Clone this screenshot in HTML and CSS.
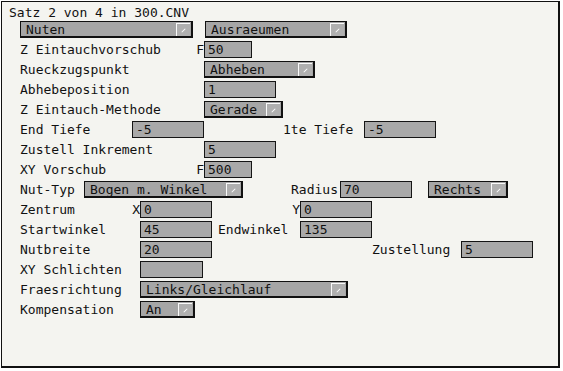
FILE: index.html
```html
<!DOCTYPE html>
<html lang="de">
<head>
  <meta charset="UTF-8">
  <title>Satz 2 von 4 in 300.CNV</title>
  <link rel="stylesheet" href="styles.css">
</head>
<body>

  <div class="frame">
    <div class="title">Satz 2 von 4 in 300.CNV</div>

    <!-- Kopfzeile: Bearbeitung -->
    <div class="row">
      <div class="select w173"><span class="val">Nuten</span><span class="arrow"></span></div>
      <div class="select w142 ml12"><span class="val">Ausraeumen</span><span class="arrow"></span></div>
    </div>

    <div class="row">
      <span class="lbl w184"><span>Z Eintauchvorschub</span><span>F</span></span>
      <span class="field w48">50</span>
    </div>

    <div class="row">
      <span class="lbl w184">Rueckzugspunkt</span>
      <div class="select w111"><span class="val">Abheben</span><span class="arrow"></span></div>
    </div>

    <div class="row">
      <span class="lbl w184">Abhebeposition</span>
      <span class="field w72">1</span>
    </div>

    <div class="row">
      <span class="lbl w184">Z Eintauch-Methode</span>
      <div class="select w79"><span class="val">Gerade</span><span class="arrow"></span></div>
    </div>

    <div class="row">
      <span class="lbl w112">End Tiefe</span>
      <span class="field w72">-5</span>
      <span class="lbl w81 ml79">1te Tiefe</span>
      <span class="field w72">-5</span>
    </div>

    <div class="row">
      <span class="lbl w184">Zustell Inkrement</span>
      <span class="field w72">5</span>
    </div>

    <div class="row">
      <span class="lbl w184"><span>XY Vorschub</span><span>F</span></span>
      <span class="field w48">500</span>
    </div>

    <!-- Nut-Geometrie -->
    <div class="row">
      <span class="lbl w64">Nut-Typ</span>
      <div class="select w159"><span class="val">Bogen m. Winkel</span><span class="arrow"></span></div>
      <span class="lbl w49 ml48">Radius</span>
      <span class="field w72">70</span>
      <div class="select w80 ml16"><span class="val">Rechts</span><span class="arrow"></span></div>
    </div>

    <div class="row">
      <span class="lbl w120"><span>Zentrum</span><span>X</span></span>
      <span class="field w72">0</span>
      <span class="lbl w88 right">Y</span>
      <span class="field w72">0</span>
    </div>

    <div class="row">
      <span class="lbl w120">Startwinkel</span>
      <span class="field w72">45</span>
      <span class="lbl w82 ml6">Endwinkel</span>
      <span class="field w72">135</span>
    </div>

    <div class="row">
      <span class="lbl w120">Nutbreite</span>
      <span class="field w72">20</span>
      <span class="lbl w89 ml160">Zustellung</span>
      <span class="field w72">5</span>
    </div>

    <div class="row">
      <span class="lbl w120">XY Schlichten</span>
      <span class="field w63"></span>
    </div>

    <div class="row">
      <span class="lbl w120">Fraesrichtung</span>
      <div class="select w208"><span class="val">Links/Gleichlauf</span><span class="arrow"></span></div>
    </div>

    <div class="row">
      <span class="lbl w120">Kompensation</span>
      <div class="select w55"><span class="val">An</span><span class="arrow"></span></div>
    </div>
  </div>

</body>
</html>
```

FILE: styles.css
```css
/* General Styles */
body {
  margin: 0;
  background-color: #ffffff;
  font-family: "DejaVu Sans Mono", "Liberation Mono", monospace;
  font-size: 13px;
  color: #111111;
}

.frame {
  margin: 1px;
  width: 559px;
  height: 367px;
  box-sizing: border-box;
  border: 1px solid #111111;
  border-right-width: 2px;
  border-bottom-width: 2px;
  background-color: #f4f4f0;
}

.title {
  height: 18px;
  line-height: 22px;
  padding-left: 7px;
  white-space: pre;
}

/* Form rows */
.row {
  display: flex;
  align-items: flex-start;
  height: 20px;
  padding-left: 18px;
}

.lbl {
  display: flex;
  justify-content: space-between;
  flex-shrink: 0;
  line-height: 20px;
  white-space: pre;
}

.lbl.right {
  justify-content: flex-end;
}

/* Input fields */
.field {
  flex-shrink: 0;
  height: 17px;
  margin-top: 1px;
  box-sizing: border-box;
  border: 1px solid #151515;
  background-color: #a9a9a9;
  padding-left: 3px;
  line-height: 15px;
}

/* Drop-down lists */
.select {
  display: flex;
  flex-shrink: 0;
  height: 17px;
  margin-top: 1px;
  box-sizing: border-box;
  border: 1px solid #111111;
  border-right-width: 2px;
  border-bottom-width: 2px;
  background-color: #a6a6a6;
}

.select .val {
  flex: 1;
  padding-left: 5px;
  line-height: 15px;
  white-space: pre;
}

.select .arrow {
  position: relative;
  width: 13px;
  margin: 1px 1px 0 0;
  border-left: 1px solid #fafafa;
  border-top: 1px solid #fafafa;
  background-color: #b0b0b0;
}

.select .arrow::after {
  content: "";
  position: absolute;
  left: 6px;
  top: 4px;
  width: 1px;
  height: 5px;
  background-color: #ffffff;
  transform: rotate(45deg);
}

/* Widths */
.w48 { width: 48px; }
.w49 { width: 49px; }
.w55 { width: 55px; }
.w63 { width: 63px; }
.w64 { width: 64px; }
.w72 { width: 72px; }
.w79 { width: 79px; }
.w80 { width: 80px; }
.w81 { width: 81px; }
.w82 { width: 82px; }
.w88 { width: 88px; }
.w89 { width: 89px; }
.w111 { width: 111px; }
.w112 { width: 112px; }
.w120 { width: 120px; }
.w142 { width: 142px; }
.w159 { width: 159px; }
.w173 { width: 173px; }
.w184 { width: 184px; }
.w208 { width: 208px; }

/* Spacing */
.ml6 { margin-left: 6px; }
.ml12 { margin-left: 12px; }
.ml16 { margin-left: 16px; }
.ml48 { margin-left: 48px; }
.ml79 { margin-left: 79px; }
.ml160 { margin-left: 160px; }
```
